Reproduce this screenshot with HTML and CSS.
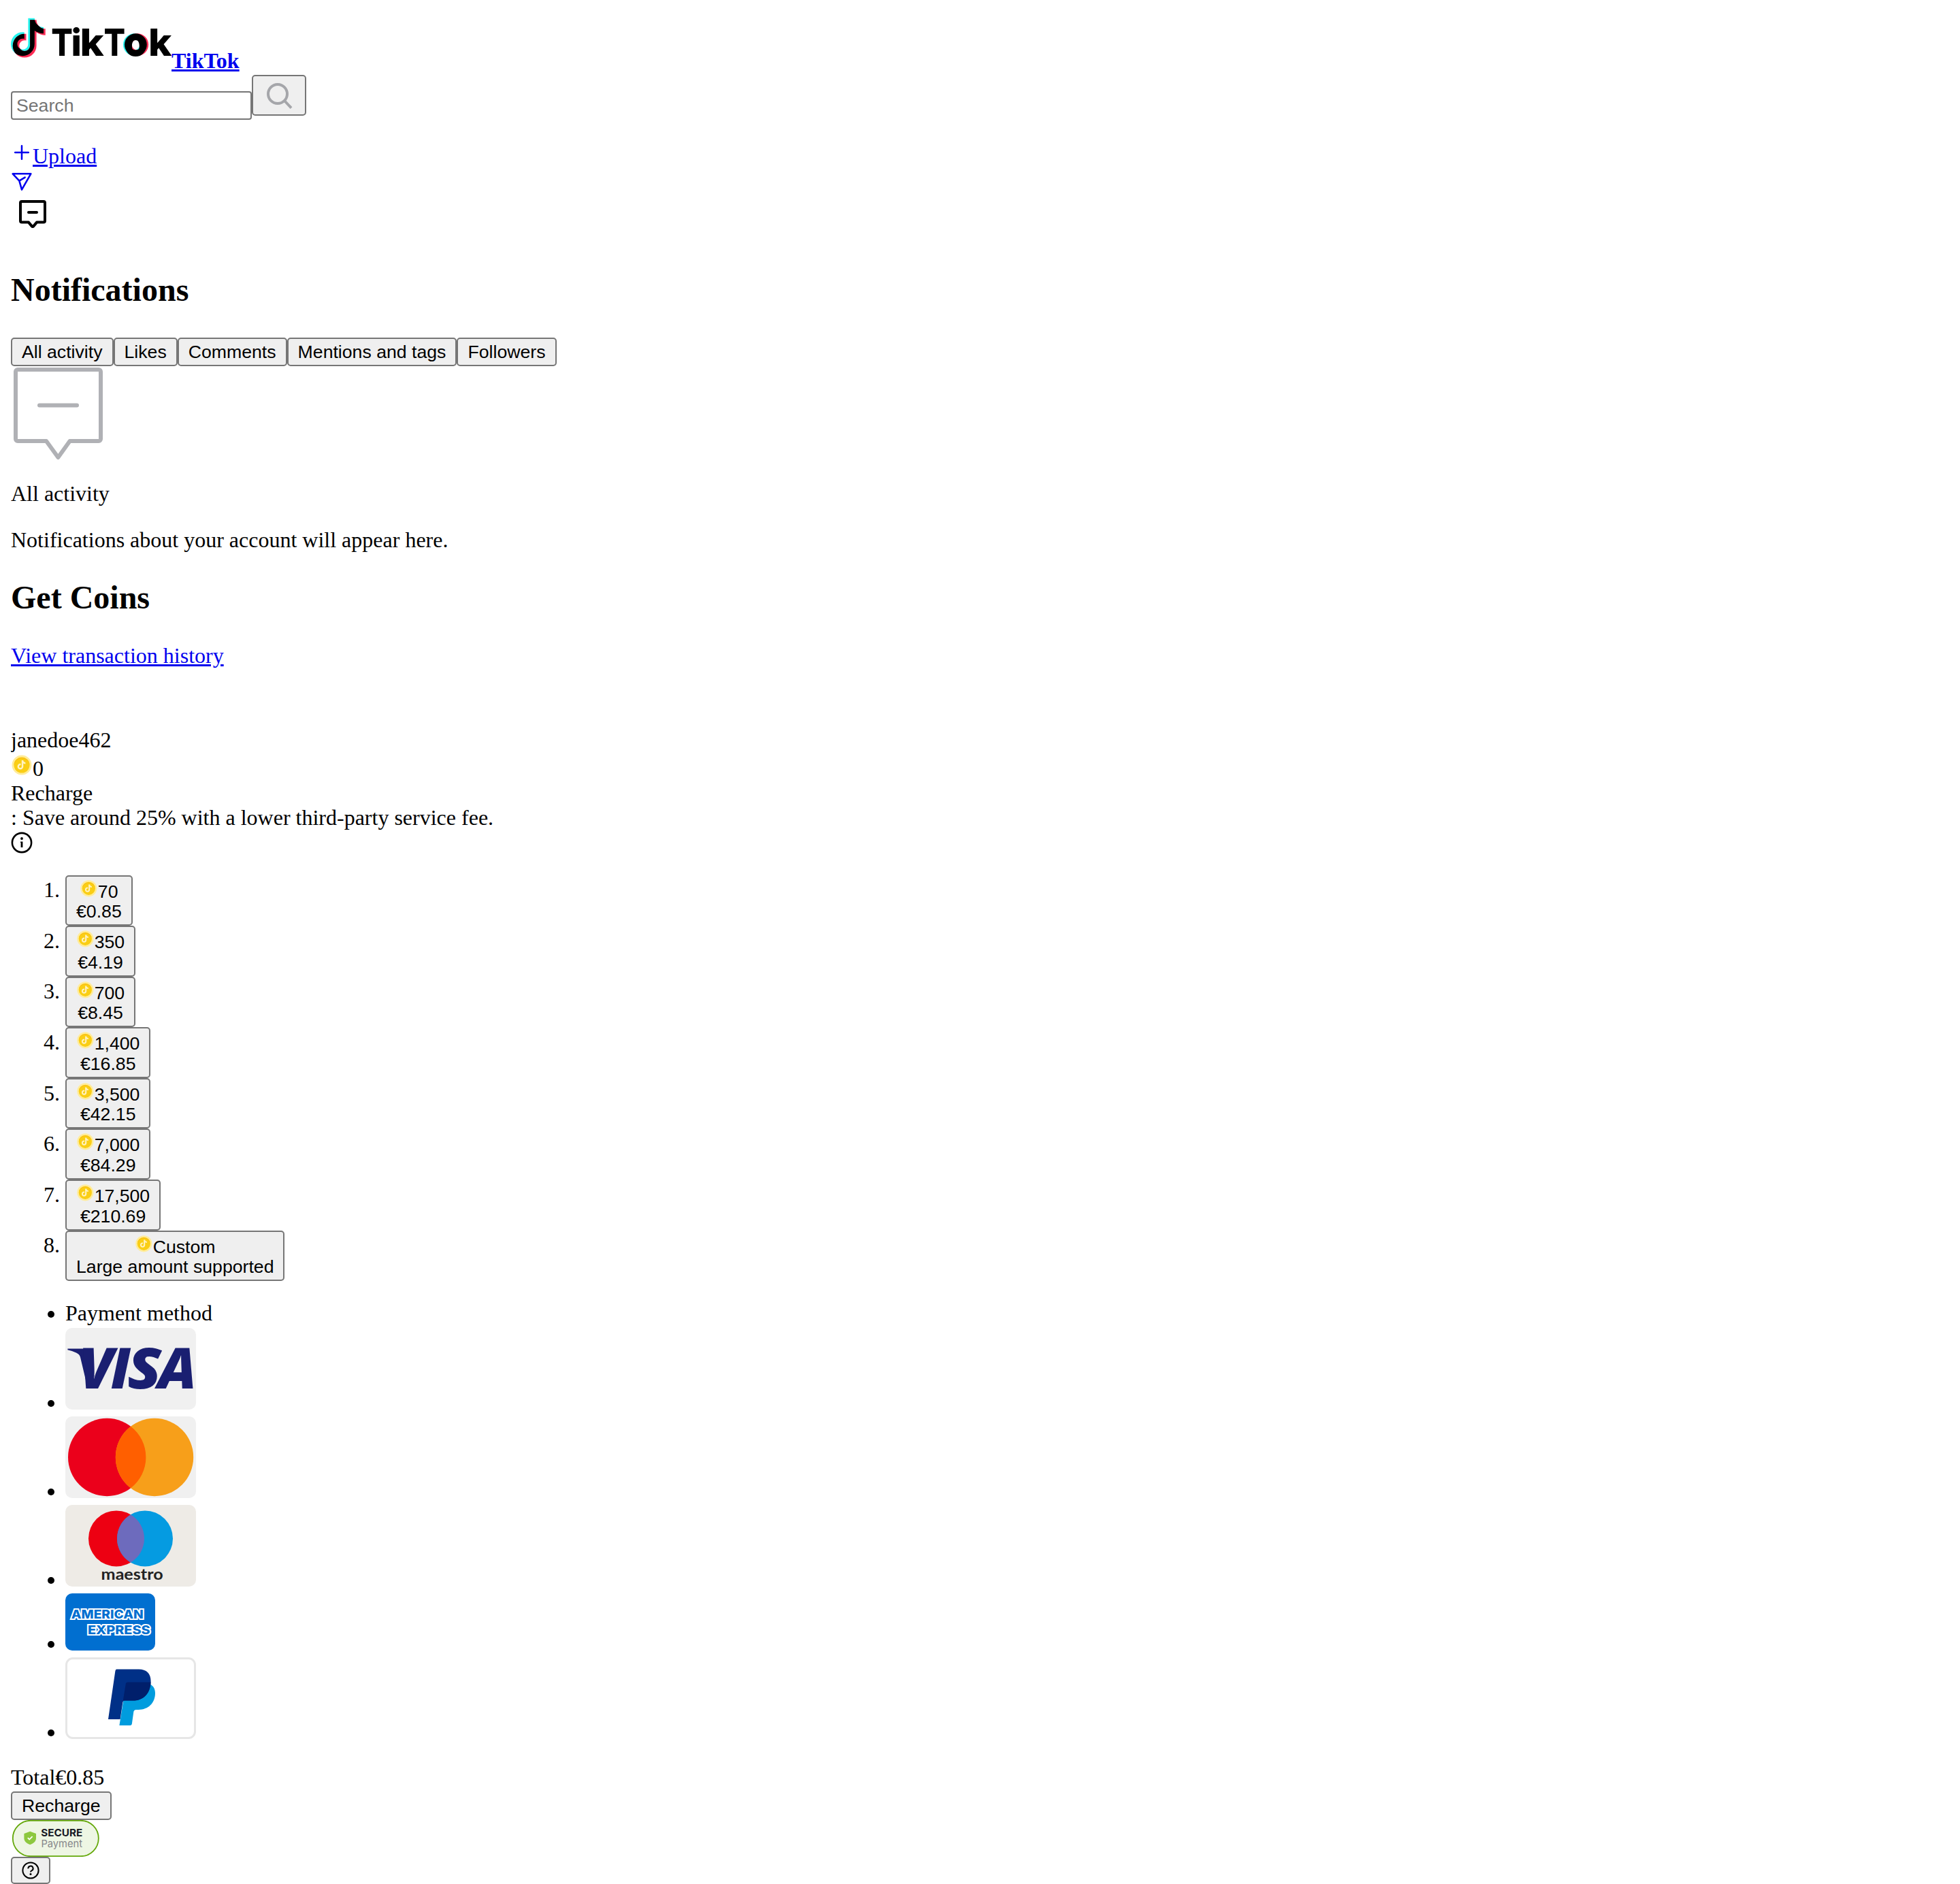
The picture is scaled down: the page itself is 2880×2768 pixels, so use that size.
FILE: index.html
```html
<!DOCTYPE html>
<html lang="en">
<head>
<meta charset="utf-8">
<title>TikTok</title>
<link rel="stylesheet" href="styles.css">
</head>
<body>
<svg class="defs" width="0" height="0">
  <defs>
    <path id="note" d="M12.68 5.39H17.41C17.41 9.05 20.35 11.98 23.99 11.98V16.66C21.55 16.66 19.25 15.9 17.4 14.55V24.37C17.4 29.18 13.5 33.1 8.7 33.1C3.9 33.1 0 29.18 0 24.37C0 19.55 3.9 15.64 8.7 15.64C9.1 15.64 9.49 15.67 9.875 15.72V20.57C9.5 20.456 9.115 20.39 8.706 20.39A3.98 3.98 0 1 0 12.68 24.4Z"/>
    <clipPath id="noteClip"><use href="#note"/></clipPath>
    <symbol id="coin" viewBox="0 0 48 48">
      <circle cx="24" cy="24" r="21.700" fill="#ffec9b"/>
      <circle cx="24" cy="24" r="17.300" fill="#face15"/>
      <path fill="#fabc15" d="M6.700 25a17.300 17.300 0 0 1 34.600 0a17.400 17.400 0 0 0-34.600 0Z"/>
      <path fill="#fff3c4" d="M23.700 13.500h3.600c.2 2.500 2 4.300 4.800 4.600v3.500c-1.800 0-3.400-.5-4.700-1.400v7a6.500 6.500 0 1 1-6.500-6.500c.3 0 .6 0 .9.100v3.700a2.900 2.900 0 1 0 1.900 2.700Z"/>
    </symbol>
  </defs>
</svg>

<header>
  <div class="brand"><a href="#"><svg class="logo" viewBox="0 0 118 42">
    <use href="#note" fill="#25f4ee"/>
    <use href="#note" x="1.38" y="1.2" fill="#fe2c55"/>
    <g clip-path="url(#noteClip)"><use href="#note" x="1.38" y="1.2"/></g>
    <circle cx="90.700" cy="24.800" r="6.100" fill="none" stroke="#25f4ee" stroke-width="4.200"/>
    <circle cx="92.900" cy="24.800" r="6.100" fill="none" stroke="#fe2c55" stroke-width="4.200"/>
    <circle cx="91.700" cy="24.800" r="6.100" fill="none" stroke="#000" stroke-width="4.200"/>
    <text class="wordmark" y="32.800"><tspan x="29.600" textLength="15.800" lengthAdjust="spacingAndGlyphs">T</tspan><tspan x="44.200">i</tspan><tspan x="50.700" textLength="17.600" lengthAdjust="spacingAndGlyphs">k</tspan><tspan x="68.200" textLength="15.800" lengthAdjust="spacingAndGlyphs">T</tspan><tspan x="83.400" textLength="16.600" lengthAdjust="spacingAndGlyphs">o</tspan><tspan x="101" textLength="17.200" lengthAdjust="spacingAndGlyphs">k</tspan></text>
  </svg><strong>TikTok</strong></a></div>
  <form class="search"><input type="search" placeholder="Search"><button type="button" aria-label="Search"><svg class="icon24" viewBox="0 0 24 24" fill="none" stroke="#a5a6aa" stroke-width="2"><circle cx="11" cy="11" r="7"/><path d="M16 16l5 5.300"/></svg></button></form>
  <div class="upload"><a href="#"><svg class="em" viewBox="0 0 16 16"><path d="M8 3.100v9.800M3.100 8h9.800" stroke="currentColor" stroke-width="1.250" stroke-linecap="round"/></svg><span>Upload</span></a></div>
  <div class="messages"><a href="#" aria-label="Messages"><svg class="em" viewBox="0 0 48 48" fill="none" stroke="currentColor" stroke-width="3.800" stroke-linejoin="round" stroke-linecap="round"><path d="M4 8H44L24 43L18.500 23.500ZM18.500 23.500L31 16"/></svg></a></div>
  <div class="inbox"><svg class="icon32" viewBox="0 0 32 32" fill="none" stroke="#000" stroke-width="2" stroke-linejoin="round" stroke-linecap="round"><path d="M8 7H24a1 1 0 0 1 1 1V21.300a1 1 0 0 1-1 1H19L16.600 25.200a.8.8 0 0 1-1.200 0L13 22.300H8a1 1 0 0 1-1-1V8a1 1 0 0 1 1-1ZM13 15h6"/></svg></div>
</header>

<section>
  <h2>Notifications</h2>
  <div class="tabs"><button>All activity</button><button>Likes</button><button>Comments</button><button>Mentions and tags</button><button>Followers</button></div>
  <svg class="empty" viewBox="0 0 70 69" fill="none" stroke="#b0b1b5" stroke-width="3" stroke-linejoin="round" stroke-linecap="round"><path d="M5 2.500H64.500a1.500 1.500 0 0 1 1.500 1.500V53.500a1.500 1.500 0 0 1-1.500 1.500H43.300L34.700 67L26 55H5A1.500 1.500 0 0 1 3.500 53.500V4A1.500 1.500 0 0 1 5 2.500ZM21 28.700H48.500"/></svg>
  <p>All activity</p>
  <p>Notifications about your account will appear here.</p>
</section>

<main>
  <h2>Get Coins</h2>
  <div class="history"><a href="#">View transaction history</a></div>
  <div class="user">janedoe462</div>
  <div class="balance"><svg class="em"><use href="#coin"/></svg><span>0</span></div>
  <div>Recharge</div>
  <div>: Save around 25% with a lower third-party service fee.</div>
  <svg class="info" viewBox="0 0 16 16"><circle cx="8" cy="8" r="7.050" fill="none" stroke="#000" stroke-width="1.300"/><circle cx="8" cy="5" r=".95"/><path d="M7 7.300h1.700v4.200H7.300V8H7Z"/></svg>

  <ol class="packs">
    <li><button><span class="coins"><svg class="em"><use href="#coin"/></svg>70</span><span>€0.85</span></button></li>
    <li><button><span class="coins"><svg class="em"><use href="#coin"/></svg>350</span><span>€4.19</span></button></li>
    <li><button><span class="coins"><svg class="em"><use href="#coin"/></svg>700</span><span>€8.45</span></button></li>
    <li><button><span class="coins"><svg class="em"><use href="#coin"/></svg>1,400</span><span>€16.85</span></button></li>
    <li><button><span class="coins"><svg class="em"><use href="#coin"/></svg>3,500</span><span>€42.15</span></button></li>
    <li><button><span class="coins"><svg class="em"><use href="#coin"/></svg>7,000</span><span>€84.29</span></button></li>
    <li><button><span class="coins"><svg class="em"><use href="#coin"/></svg>17,500</span><span>€210.69</span></button></li>
    <li><button><span class="coins"><svg class="em"><use href="#coin"/></svg>Custom</span><span>Large amount supported</span></button></li>
  </ol>

  <ul class="methods">
    <li>Payment method</li>
    <li class="method"><svg class="card" viewBox="0 0 96 60"><rect width="96" height="60" rx="5" fill="#f0f0f0"/>
      <path fill="#1a1f71" d="M1.700 15.200H15.200Q17.600 15.200 18 17.600L21.200 35.500L16.500 44.600L11 21.500Q10.300 19.300 8 18.300Q5 16.800 1.700 16.100Z"/>
      <text class="visa" y="44.600"><tspan x="10">V</tspan><tspan x="33.300">I</tspan><tspan x="45.600" textLength="25" lengthAdjust="spacingAndGlyphs">S</tspan><tspan x="68" textLength="28.500" lengthAdjust="spacingAndGlyphs">A</tspan></text></svg></li>
    <li class="method"><svg class="card" viewBox="0 0 96 60"><rect width="96" height="60" rx="5" fill="#f0f0f0"/>
      <circle cx="30.600" cy="30" r="28.600" fill="#eb001b"/><circle cx="65.500" cy="30" r="28.600" fill="#f79f1a"/>
      <path fill="#ff5f00" d="M48.050 7.340A28.600 28.600 0 0 1 48.050 52.660A28.600 28.600 0 0 1 48.050 7.340Z"/></svg></li>
    <li class="method"><svg class="card" viewBox="0 0 96 60"><rect width="96" height="60" rx="5" fill="#eeebe6"/>
      <circle cx="37.500" cy="24.700" r="20.500" fill="#ed0012"/><circle cx="58.500" cy="24.700" r="20.500" fill="#059be1"/>
      <path fill="#6d6bbd" d="M48 7.100A20.500 20.500 0 0 1 48 42.300A20.500 20.500 0 0 1 48 7.100Z"/>
      <text class="maestro" x="26.300" y="55.200" textLength="45.500" lengthAdjust="spacingAndGlyphs">maestro</text></svg></li>
    <li class="method method-small"><svg class="amex" viewBox="0 0 66 42"><rect width="66" height="42" rx="5" fill="#016fd0"/>
      <text class="amex-name" x="4.400" y="18.600" textLength="52.900" lengthAdjust="spacingAndGlyphs">AMERICAN</text>
      <text class="amex-name" x="16.500" y="30.100" textLength="45.800" lengthAdjust="spacingAndGlyphs">EXPRESS</text></svg></li>
    <li class="method"><svg class="card" viewBox="0 0 96 60"><rect x=".75" y=".75" width="94.500" height="58.500" rx="4.800" fill="#fff" stroke="#e6e6e6" stroke-width="1.500"/>
      <path fill="#009cde" d="M44.800 18.200H60L62.800 20C65 21.500 66 23.500 66 26.300C66 33.500 61 38.500 53.700 38.500H51.800Q50.500 38.500 50.200 39.800L48.900 49Q48.700 50 47.600 50H39.700Z"/>
      <path fill="#003087" d="M37.800 8.800H54C59.600 8.800 62.800 12 62.800 17.500C62.800 26.500 57.500 31.800 49.500 31.800H43.600Q42.400 31.800 42.200 33L40.300 45.500H31.500L36.700 10Q36.900 8.800 37.800 8.800Z"/>
      <path fill="#001f6b" d="M45.800 18.200H62.750C62.200 26.800 57.200 31.800 49.500 31.800H42.400L44.400 19.400Q44.600 18.200 45.800 18.200Z"/></svg></li>
  </ul>

  <div>Total€0.85</div>
  <div class="pay"><button>Recharge</button></div>
  <svg class="secure" viewBox="0 0 66 27"><rect x="1.400" y=".4" width="63" height="26.200" rx="13.100" fill="#eef6e4" stroke="#64a80a" stroke-width=".9"/>
    <path fill="#8dc83f" d="M14.100 8.400L18.500 10V13.500C18.500 15.700 16.400 17.300 14.100 18.100C11.800 17.300 9.700 15.700 9.700 13.500V10Z"/>
    <path d="M12.400 13.100L13.600 14.300L15.800 12.100" fill="none" stroke="#fff" stroke-width=".9"/>
    <text class="secure-top" x="22.100" y="12" textLength="30.500" lengthAdjust="spacingAndGlyphs">SECURE</text>
    <text class="secure-bottom" x="22.200" y="20.200" textLength="30.300" lengthAdjust="spacingAndGlyphs">Payment</text></svg>
  <button class="help" aria-label="Help"><svg viewBox="0 0 13 14" fill="none" stroke="#000" stroke-width="1"><circle cx="6.500" cy="7" r="5.800"/><path d="M4.700 5.700a1.800 1.800 0 1 1 2.600 1.500q-.8.400-.8 1.100"/><circle cx="6.500" cy="9.800" r=".75" fill="#000" stroke="none"/></svg></button>
</main>
</body>
</html>
```
FILE: styles.css
```css
html {
  zoom: 2;
  background: #fff;
}

body {
  margin: 8px 8px 0;
  font-family: "Liberation Serif", "Times New Roman", serif;
  font-size: 16px;
  line-height: 18px;
  color: #000;
}

a {
  color: #0000ee;
}

h2 {
  line-height: 27px;
}

button,
input {
  box-sizing: border-box;
  margin: 0;
  border: 1px solid #767676;
  font-family: "Liberation Sans", Arial, sans-serif;
  font-size: 13.3333px;
  line-height: 15px;
  color: #000;
}

button {
  padding: 2px 7px;
  border-radius: 2.5px;
  background: #efefef;
}

input {
  appearance: none;
  width: 177px;
  height: 21px;
  padding: 2px 3px;
  border-radius: 2px;
  background: #fff;
}

input::placeholder {
  color: #757575;
}

.defs {
  position: absolute;
}

.brand {
  height: 47px;
}

.logo {
  width: 118px;
  height: 42px;
}

.wordmark {
  font: 800 27.2px Inter, sans-serif;
  fill: #000;
}

.em {
  width: 1em;
  height: 1em;
}

.search {
  display: flex;
  align-items: flex-start;
  height: 33px;
  margin: 0 0 16px;
}

.search input {
  margin-top: 12px;
}

.icon24 {
  display: block;
  width: 24px;
  height: 24px;
}

.upload {
  height: 20px;
}

.messages,
.inbox {
  box-sizing: border-box;
  display: flex;
}

.messages {
  height: 17px;
  padding-top: 1px;
}

.messages svg,
.inbox svg {
  display: block;
}

.icon32 {
  width: 32px;
  height: 32px;
}

.inbox {
  height: 38.5px;
}

.tabs {
  display: flex;
  padding-top: 1.6px;
}

.tabs button {
  height: 21px;
}

.empty {
  display: block;
  width: 70px;
  height: 69px;
  margin-bottom: -0.5px;
}

.user {
  margin-top: 44px;
}

.balance {
  box-sizing: border-box;
  height: 21px;
  padding-top: 1.5px;
}

.info {
  display: block;
  width: 16px;
  height: 16px;
  margin-top: 1.5px;
}

.packs {
  margin: 16px 0 14.6px;
}

.packs li {
  height: 37.3px;
}

.packs button {
  display: inline-grid;
  justify-items: center;
  height: 37.3px;
}

.coins {
  height: 16.3px;
}

.methods {
  margin: 0 0 16px;
}

.method {
  box-sizing: border-box;
  height: 65px;
  padding-top: 1.7px;
}

.method-small {
  height: 47px;
}

.card {
  width: 96px;
  height: 60px;
}

.amex {
  width: 66px;
  height: 42px;
}

.visa {
  font: italic 800 41.6px "Open Sans", sans-serif;
  fill: #1a1f71;
}

.maestro {
  font: 700 11px Lato, sans-serif;
  fill: #222;
}

.amex-name {
  font: 800 8.8px Inter, sans-serif;
  fill: #016fd0;
  stroke: #fff;
  stroke-width: 1.9px;
  paint-order: stroke;
}

.pay {
  display: flex;
  margin-top: 1.5px;
}

.secure {
  display: block;
  width: 66px;
  height: 27px;
}

.secure-top {
  font: 700 7.4px Inter, sans-serif;
  fill: #161823;
}

.secure-bottom {
  font: 400 7.4px Inter, sans-serif;
  fill: #86878b;
}

.help {
  display: block;
  height: 20px;
}

.help svg {
  display: block;
  width: 13px;
  height: 14px;
}
```
